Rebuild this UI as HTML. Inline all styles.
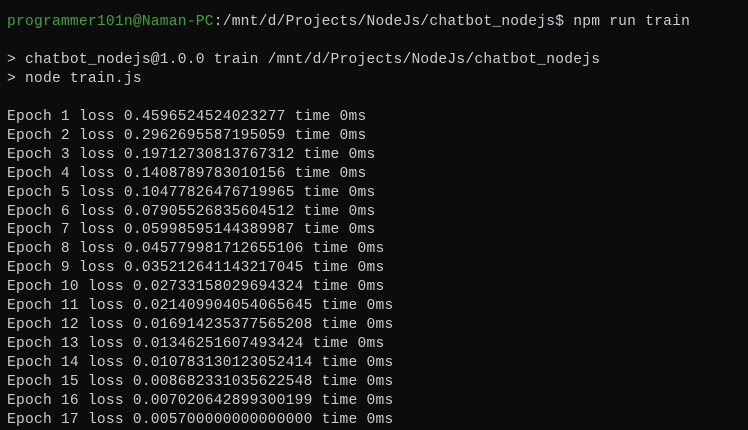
<!DOCTYPE html>
<html><head><style>
html,body{margin:0;padding:0;background:#0c0c0c;width:748px;height:414px;overflow:hidden}
pre{margin:0;position:absolute;left:7px;top:13px;font-family:"Liberation Mono",monospace;font-size:14.6px;letter-spacing:0.23px;line-height:18.95px;color:#cccccc}
.g{color:#3fa33a}
.p{color:#c6cbd4}
</style></head><body>
<pre><span class="g">programmer101n@Naman-PC</span><span class="p">:/mnt/d/Projects/NodeJs/chatbot_nodejs</span>$ npm run train

&gt; chatbot_nodejs@1.0.0 train /mnt/d/Projects/NodeJs/chatbot_nodejs
&gt; node train.js

Epoch 1 loss 0.4596524524023277 time 0ms
Epoch 2 loss 0.2962695587195059 time 0ms
Epoch 3 loss 0.19712730813767312 time 0ms
Epoch 4 loss 0.1408789783010156 time 0ms
Epoch 5 loss 0.10477826476719965 time 0ms
Epoch 6 loss 0.07905526835604512 time 0ms
Epoch 7 loss 0.05998595144389987 time 0ms
Epoch 8 loss 0.045779981712655106 time 0ms
Epoch 9 loss 0.035212641143217045 time 0ms
Epoch 10 loss 0.02733158029694324 time 0ms
Epoch 11 loss 0.021409904054065645 time 0ms
Epoch 12 loss 0.016914235377565208 time 0ms
Epoch 13 loss 0.01346251607493424 time 0ms
Epoch 14 loss 0.010783130123052414 time 0ms
Epoch 15 loss 0.008682331035622548 time 0ms
Epoch 16 loss 0.007020642899300199 time 0ms
Epoch 17 loss 0.005700000000000000 time 0ms</pre>
</body></html>
